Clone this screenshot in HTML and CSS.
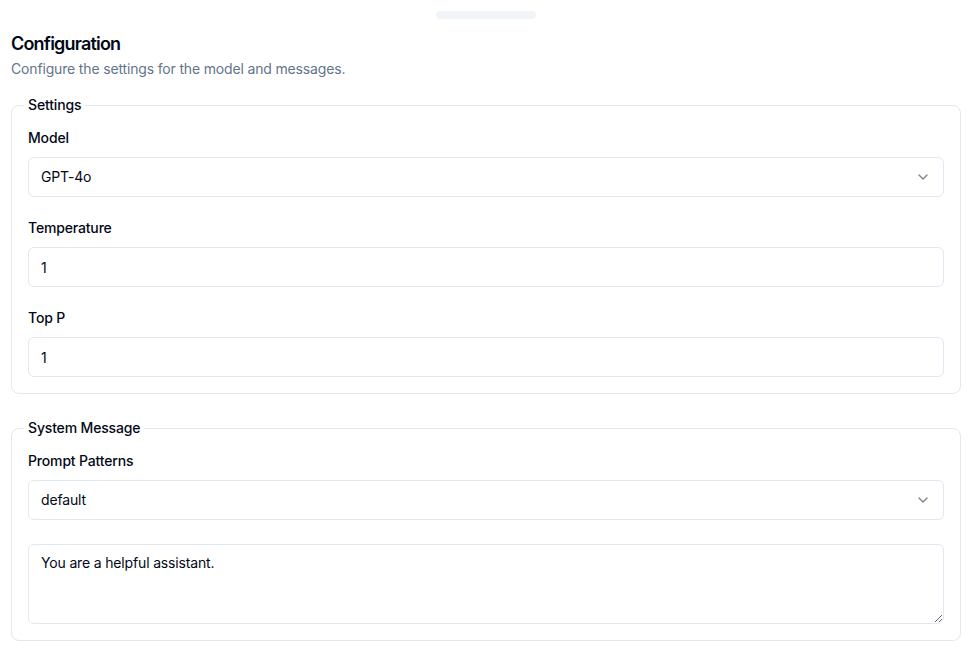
FILE: index.html
```html
<!DOCTYPE html>
<html>
<head>
<meta charset="utf-8">
<link rel="stylesheet" href="styles.css">
</head>
<body>
<div class="drawer">
  <div class="handle"></div>
  <div class="header">
    <h2 class="title">Configuration</h2>
    <p class="desc">Configure the settings for the model and messages.</p>
  </div>
  <form class="form">
    <fieldset class="fs">
      <legend class="legend">Settings</legend>
      <div class="group">
        <label class="label">Model</label>
        <div class="select"><span>GPT-4o</span>
          <svg class="chev" viewBox="0 0 24 24" width="16" height="16" fill="none" stroke="currentColor" stroke-width="2" stroke-linecap="round" stroke-linejoin="round"><path d="m6 9 6 6 6-6"/></svg>
        </div>
      </div>
      <div class="group">
        <label class="label">Temperature</label>
        <input class="input" type="text" value="1">
      </div>
      <div class="group">
        <label class="label">Top P</label>
        <input class="input" type="text" value="1">
      </div>
    </fieldset>
    <fieldset class="fs">
      <legend class="legend">System Message</legend>
      <div class="group">
        <label class="label">Prompt Patterns</label>
        <div class="select"><span>default</span>
          <svg class="chev" viewBox="0 0 24 24" width="16" height="16" fill="none" stroke="currentColor" stroke-width="2" stroke-linecap="round" stroke-linejoin="round"><path d="m6 9 6 6 6-6"/></svg>
        </div>
      </div>
      <textarea class="textarea">You are a helpful assistant.</textarea>
    </fieldset>
  </form>
</div>
</body>
</html>
```
FILE: styles.css
```css
* { box-sizing: border-box; }
html, body { margin: 0; padding: 0; background: #fff; }
body {
  font-family: Inter, "Liberation Sans", sans-serif;
  color: #020817;
  letter-spacing: -0.16px;
}
.drawer { padding: 0 12px 0 11px; }
.handle {
  width: 100px; height: 8px; border-radius: 9999px;
  background: #f1f5f9; margin: 11px auto 0;
}
.header { display: grid; gap: 6px; padding: 16px 0; }
.title {
  margin: 0; font-size: 18px; line-height: 18px; font-weight: 600;
  letter-spacing: -0.8px;
}
.desc { margin: 0; font-size: 14px; line-height: 20px; color: #64748b; }
.form { display: grid; gap: 24px; }
.fs {
  margin: 0; display: grid; gap: 24px;
  border: 1px solid #e2e8f0; border-radius: 8px; padding: 16px;
  min-width: 0;
}
.legend {
  margin-left: -4px; padding: 0 4px;
  font-size: 14px; line-height: 20px; font-weight: 500;
}
.group { display: grid; gap: 12px; }
.label { font-size: 14px; line-height: 14px; font-weight: 500; }
.select, .input {
  height: 40px; width: 100%;
  border: 1px solid #e2e8f0; border-radius: 6px;
  padding: 8px 12px; font-size: 14px; line-height: 20px;
  font-family: inherit; letter-spacing: inherit; color: #020817; background: #fff;
}
.select { display: flex; align-items: center; justify-content: space-between; }
.chev { opacity: 0.5; }
.input { outline: none; }
.textarea {
  display: block; width: 100%; height: 80px; min-height: 80px;
  border: 1px solid #e2e8f0; border-radius: 6px;
  padding: 8px 12px; font-size: 14px; line-height: 20px;
  font-family: inherit; letter-spacing: inherit; color: #020817; background: #fff; margin: 0;
  outline: none;
}
```
